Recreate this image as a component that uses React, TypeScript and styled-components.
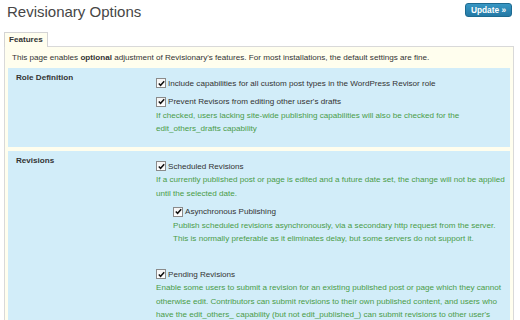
import styled, { createGlobalStyle } from 'styled-components';

const GlobalStyle = createGlobalStyle`
    html, body {
        margin: 0;
        padding: 0;
        background: #ffffff;
    }
    body {
        font-family: "Liberation Sans", Arial, sans-serif;
        font-size: 8.1px;
        line-height: 13.5px;
        color: #333333;
    }
`;

const Page = styled.div`
    width: 520px;
    height: 320px;
    overflow: hidden;
    box-sizing: border-box;
    padding: 0 6px 0 4px;
`;

const Header = styled.div`
    display: flex;
    justify-content: space-between;
    align-items: flex-start;
    padding: 3px 2px 0 3px;
`;

const Title = styled.h2`
    margin: 0;
    font-size: 15px;
    line-height: 18px;
    font-weight: normal;
    color: #464646;
`;

const UpdateButton = styled.button`
    height: 14px;
    padding: 0 5px;
    border: 1px solid #1d6a90;
    border-radius: 3px;
    background: linear-gradient(#3797c4, #2479a5);
    color: #ffffff;
    font-family: inherit;
    font-size: 8.3px;
    font-weight: bold;
    line-height: 12px;
    cursor: pointer;
`;

const Tabs = styled.div`
    display: flex;
    margin-top: 11px;
`;

const Tab = styled.div`
    position: relative;
    z-index: 1;
    margin-bottom: -1px;
    padding: 0 4px;
    height: 14px;
    line-height: 14px;
    border: 1px solid #d4d4d4;
    border-bottom: none;
    background: #fffeee;
    font-weight: bold;
    color: #333333;
`;

const Panel = styled.div`
    border: 1px solid #d9d9d9;
    border-bottom: none;
    background: #fffeee;
    padding: 4px 3px 0;
    height: 300px;
`;

const Intro = styled.p`
    margin: 0 0 3px 4px;
`;

const Section = styled.div<{ $gap?: number }>`
    display: grid;
    grid-template-columns: 140px 1fr;
    padding: 0 2px 11px 8px;
    margin-bottom: ${({ $gap }) => $gap ?? 4}px;
    background: #d2edf9;
`;

const SectionLabel = styled.div`
    padding-top: 3px;
    font-weight: bold;
    color: #333333;
`;

const Options = styled.div`
    padding-top: 9px;
`;

const Option = styled.div<{ $indent?: number; $space?: number }>`
    margin-left: ${({ $indent }) => $indent ?? 0}px;
    margin-bottom: ${({ $space }) => $space ?? 5}px;
`;

const CheckRow = styled.label`
    display: flex;
    align-items: center;
    gap: 2px;
    white-space: nowrap;
    color: #333333;
`;

const Box = styled.span`
    display: inline-flex;
    align-items: center;
    justify-content: center;
    width: 8px;
    height: 8px;
    border: 1px solid #8a8a8a;
    background: linear-gradient(#f4f4f4, #ffffff);
    flex-shrink: 0;
`;

const Help = styled.div`
    color: #4a9c48;
    white-space: nowrap;
`;

const Check = () => (
    <Box>
        <svg width="7" height="7" viewBox="0 0 7 7">
            <path d="M0.8 3.4 L2.6 5.3 L6.2 1.2" fill="none" stroke="#111" strokeWidth="1.5" />
        </svg>
    </Box>
);

type OptionProps = {
    label: string;
    help?: string[];
    indent?: number;
    space?: number;
};

const OptionItem = ({ label, help, indent, space }: OptionProps) => (
    <Option $indent={indent} $space={space}>
        <CheckRow>
            <Check />
            {label}
        </CheckRow>
        {help && help.map((line) => <Help key={line}>{line}</Help>)}
    </Option>
);

export default function App() {
    return (
        <>
            <GlobalStyle />
            <Page>
                <Header>
                    <Title>Revisionary Options</Title>
                    <UpdateButton>Update »</UpdateButton>
                </Header>
                <Tabs>
                    <Tab>Features</Tab>
                </Tabs>
                <Panel>
                    <Intro>
                        This page enables <b>optional</b> adjustment of Revisionary's features. For most
                        installations, the default settings are fine.
                    </Intro>
                    <Section>
                        <SectionLabel>Role Definition</SectionLabel>
                        <Options>
                            <OptionItem label="Include capabilities for all custom post types in the WordPress Revisor role" />
                            <OptionItem
                                label="Prevent Revisors from editing other user's drafts"
                                space={0}
                                help={[
                                    'If checked, users lacking site-wide publishing capabilities will also be checked for the',
                                    'edit_others_drafts capability',
                                ]}
                            />
                        </Options>
                    </Section>
                    <Section>
                        <SectionLabel>Revisions</SectionLabel>
                        <Options>
                            <OptionItem
                                label="Scheduled Revisions"
                                help={[
                                    'If a currently published post or page is edited and a future date set, the change will not be applied',
                                    'until the selected date.',
                                ]}
                            />
                            <OptionItem
                                label="Asynchronous Publishing"
                                indent={17}
                                space={22}
                                help={[
                                    'Publish scheduled revisions asynchronously, via a secondary http request from the server.',
                                    'This is normally preferable as it eliminates delay, but some servers do not support it.',
                                ]}
                            />
                            <OptionItem
                                label="Pending Revisions"
                                help={[
                                    'Enable some users to submit a revision for an existing published post or page which they cannot',
                                    'otherwise edit. Contributors can submit revisions to their own published content, and users who',
                                    "have the edit_others_ capability (but not edit_published_) can submit revisions to other user's",
                                ]}
                            />
                        </Options>
                    </Section>
                </Panel>
            </Page>
        </>
    );
}
